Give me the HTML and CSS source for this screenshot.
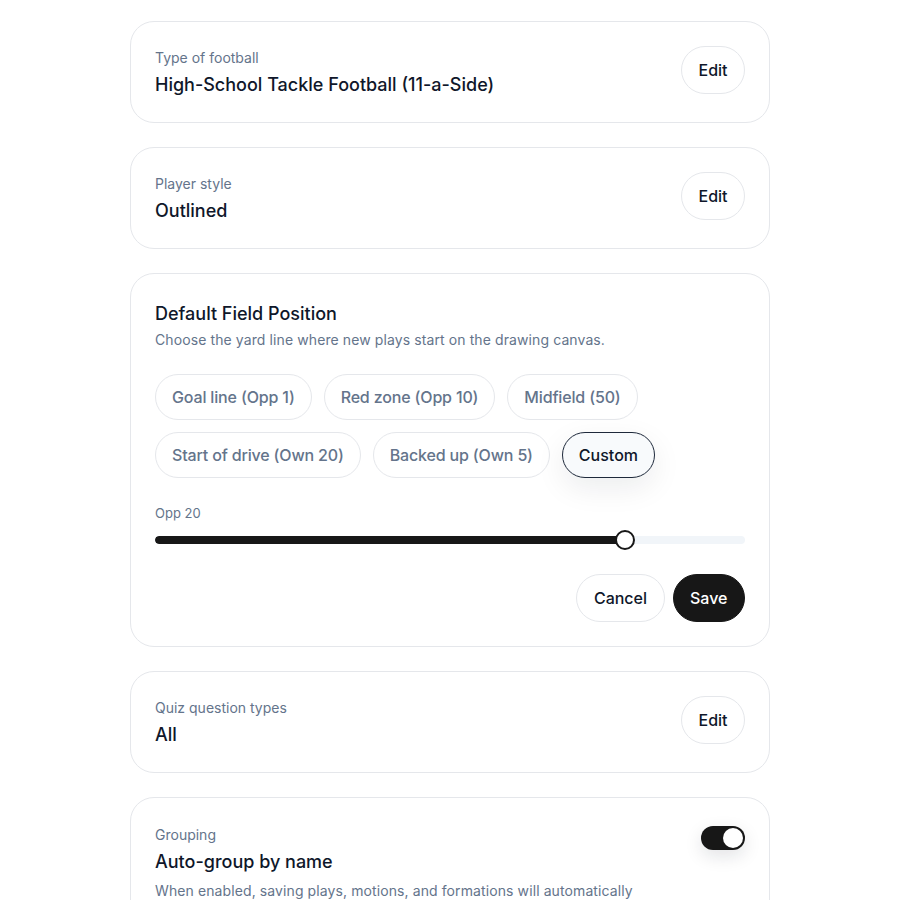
FILE: index.html
```html
<!DOCTYPE html>
<html lang="en">
<head>
    <meta charset="UTF-8">
    <meta name="viewport" content="width=device-width, initial-scale=1.0">
    <title>Playbook Settings</title>
    <link rel="stylesheet" href="styles.css">
</head>
<body>

<div id="settings">

    <div class="card row">
        <div class="info">
            <div class="label">Type of football</div>
            <div class="value">High-School Tackle Football (11-a-Side)</div>
        </div>
        <button class="btn">Edit</button>
    </div>

    <div class="card row">
        <div class="info">
            <div class="label">Player style</div>
            <div class="value">Outlined</div>
        </div>
        <button class="btn">Edit</button>
    </div>

    <div class="card">
        <div class="title">Default Field Position</div>
        <div class="subtitle">Choose the yard line where new plays start on the drawing canvas.</div>

        <div class="chips">
            <button class="chip">Goal line (Opp 1)</button>
            <button class="chip">Red zone (Opp 10)</button>
            <button class="chip">Midfield (50)</button>
            <button class="chip">Start of drive (Own 20)</button>
            <button class="chip">Backed up (Own 5)</button>
            <button class="chip active">Custom</button>
        </div>

        <div class="slider-label">Opp 20</div>
        <div class="slider">
            <div class="track">
                <div class="fill" style="width: 79.6%;"></div>
            </div>
            <div class="thumb" style="left: 79.6%;"></div>
        </div>

        <div class="actions">
            <button class="btn">Cancel</button>
            <button class="btn dark">Save</button>
        </div>
    </div>

    <div class="card row">
        <div class="info">
            <div class="label">Quiz question types</div>
            <div class="value">All</div>
        </div>
        <button class="btn">Edit</button>
    </div>

    <div class="card toggle-card">
        <div class="info">
            <div class="label">Grouping</div>
            <div class="value">Auto-group by name</div>
            <div class="desc">When enabled, saving plays, motions, and formations will automatically</div>
        </div>
        <div class="toggle on"><div class="knob"></div></div>
    </div>

</div>

</body>
</html>
```

FILE: styles.css
```css
body {
    font-family: 'Inter', 'Liberation Sans', sans-serif;
    margin: 0;
    padding: 0;
    background-color: #ffffff;
    color: #0f172a;
    overflow: hidden;
}

#settings {
    width: 640px;
    margin: 0 auto;
    padding-top: 21px;
    display: flex;
    flex-direction: column;
    gap: 24px;
}

.card {
    border: 1px solid #e5e7eb;
    border-radius: 24px;
    padding: 24px;
    background-color: #ffffff;
}

.row {
    display: flex;
    align-items: flex-start;
    justify-content: space-between;
}

.row .label {
    line-height: 24px;
}

.row .value {
    margin-top: 0;
    padding-top: 1px;
    line-height: 27px;
}

.label {
    font-size: 14px;
    line-height: 20px;
    color: #64748b;
}

.value {
    font-size: 18px;
    line-height: 28px;
    font-weight: 500;
    margin-top: 3px;
    color: #0f172a;
}

.btn {
    font-family: inherit;
    font-size: 16px;
    font-weight: 500;
    line-height: 24px;
    height: 48px;
    padding: 0 16.5px;
    border: 1px solid #e5e7eb;
    border-radius: 999px;
    background-color: #ffffff;
    color: #0f172a;
}

.btn.dark {
    background-color: #171717;
    border-color: #171717;
    color: #ffffff;
}

.title {
    font-size: 18px;
    line-height: 28px;
    font-weight: 500;
    margin-top: 2px;
}

.subtitle {
    font-size: 14px;
    line-height: 20px;
    letter-spacing: 0.1px;
    color: #64748b;
    margin-top: 2px;
}

.chips {
    display: flex;
    flex-wrap: wrap;
    gap: 12px;
    margin-top: 24px;
}

.chip {
    font-family: inherit;
    font-size: 16px;
    font-weight: 500;
    line-height: 24px;
    letter-spacing: -0.01em;
    padding: 10px 16px;
    border: 1px solid #e5e7eb;
    border-radius: 999px;
    background-color: #ffffff;
    color: #64748b;
}

.chip.active {
    border-color: #1e293b;
    background-color: #f8fafc;
    color: #0f172a;
    letter-spacing: 0;
    box-shadow: 0 10px 30px rgba(15, 23, 42, 0.08);
}

.slider-label {
    font-size: 13px;
    line-height: 18px;
    color: #64748b;
    margin-top: 26px;
}

.slider {
    position: relative;
    height: 20px;
    margin-top: 8px;
    display: flex;
    align-items: center;
}

.track {
    width: 100%;
    height: 8px;
    border-radius: 999px;
    background-color: #f1f5f9;
    overflow: hidden;
}

.fill {
    height: 100%;
    background-color: #171717;
    border-radius: 999px;
}

.thumb {
    position: absolute;
    top: 0;
    width: 20px;
    height: 20px;
    margin-left: -10px;
    box-sizing: border-box;
    border: 2px solid #171717;
    border-radius: 50%;
    background-color: #ffffff;
}

.actions {
    display: flex;
    justify-content: flex-end;
    gap: 8px;
    margin-top: 24px;
}

.toggle-card {
    display: flex;
    justify-content: space-between;
    align-items: flex-start;
    padding-top: 27px;
}

.desc {
    font-size: 14px;
    line-height: 22px;
    letter-spacing: 0.1px;
    color: #64748b;
    margin-top: 4px;
}

.toggle {
    width: 44px;
    height: 24px;
    border-radius: 999px;
    background-color: #171717;
    margin-top: 1px;
    padding: 2px;
    box-sizing: border-box;
    display: flex;
    justify-content: flex-end;
    box-shadow: 0 6px 18px rgba(15, 23, 42, 0.12);
}

.knob {
    width: 20px;
    height: 20px;
    border-radius: 50%;
    background-color: #ffffff;
}
```
